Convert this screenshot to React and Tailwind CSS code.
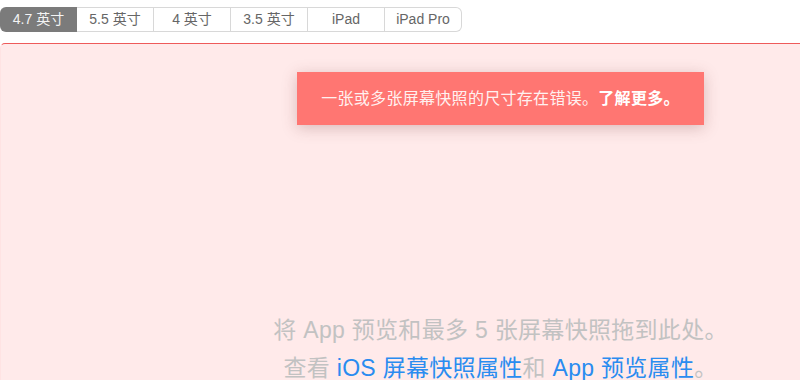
const tabs = ["4.7 英寸", "5.5 英寸", "4 英寸", "3.5 英寸", "iPad", "iPad Pro"];

export default function App() {
  return (
    <div
      className="h-[380px] w-[800px] overflow-hidden bg-white"
      style={{ fontFamily: '"Liberation Sans", "Noto Sans CJK SC", sans-serif' }}
    >
      <div className="flex pt-[7px]">
        {tabs.map((t, i) => (
          <div
            key={t}
            className={
              i === 0
                ? "flex h-[25px] w-[77px] items-center justify-center rounded-l-[6px] bg-[#7b7b7b] text-[14px] text-[#f4f4f4]"
                : i === tabs.length - 1
                ? "flex h-[25px] w-[77px] items-center justify-center rounded-r-[6px] border border-l-0 border-[#d8d8d8] text-[14px] text-[#666]"
                : "flex h-[25px] w-[77px] items-center justify-center border border-l-0 border-[#d8d8d8] text-[14px] text-[#666]"
            }
          >
            {t}
          </div>
        ))}
      </div>

      <div className="mt-[11px] h-[400px] w-[1000px] rounded-tl-[5px] border-t border-l border-[#ee5a5a] border-l-[#ffe3e3] bg-[#ffeaea] pt-[28px]">
        <div className="flex justify-center">
          <div className="flex h-[53px] w-[407px] items-center justify-center bg-[#ff7672] text-[16px] tracking-[0.3px] text-[#fff1f0] shadow-[0_3px_14px_rgba(120,60,60,0.28)]">
            一张或多张屏幕快照的尺寸存在错误。<span className="font-bold text-white">了解更多。</span>
          </div>
        </div>

        <div className="mt-[186px] text-center text-[23px] leading-[38px] tracking-[0.3px] text-[#c2c2c2]">
          <p>将 App 预览和最多 5 张屏幕快照拖到此处。</p>
          <p>
            查看 <span className="text-[#2a8cf0]">iOS 屏幕快照属性</span>和{" "}
            <span className="text-[#2a8cf0]">App 预览属性</span>。
          </p>
        </div>
      </div>
    </div>
  );
}
